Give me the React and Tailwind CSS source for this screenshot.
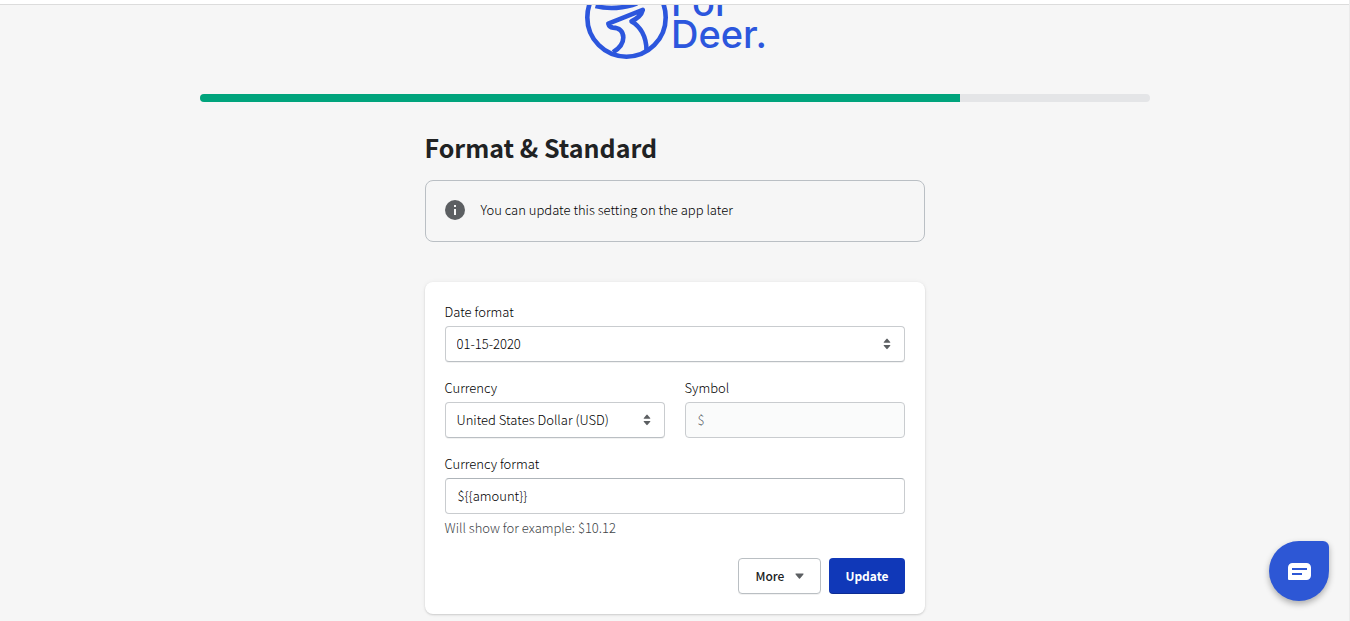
import React from "react";

function Logo() {
  return (
    <svg
      className="h-[54px] w-[180px] shrink-0"
      viewBox="0 0 180 54"
      overflow="visible"
      role="img"
      aria-label="For Deer."
      fill="none"
      stroke="#2c56dd"
      strokeWidth="4.6"
      strokeLinejoin="round"
    >
      <defs>
        <clipPath id="logo-area">
          <rect x="0" y="0" width="184" height="54" />
        </clipPath>
      </defs>
      <g clipPath="url(#logo-area)">
        <circle cx="41.5" cy="12.5" r="39.2" />
        <path d="M10.5 1C23 4.4 40 3.4 52 -1.6" />
        <path d="M28 47.2C36 42.5 38.3 38 38.3 32.5C38.3 26 34 22.8 28 22.6C25.5 22.4 23.8 20.5 23.3 18.6L57.8 4.8C56.3 10.6 52.5 13.2 46.5 16.4C55 21 61.5 31 61.5 45.5" />
        <g
          fill="#2c56dd"
          stroke="none"
          fontFamily="Inter, 'Liberation Sans', sans-serif"
          fontSize="38"
          fontWeight="500"
        >
          <text x="86" y="11">For</text>
          <text x="86" y="43">Deer.</text>
        </g>
      </g>
    </svg>
  );
}

function Updown() {
  return (
    <svg
      className="pointer-events-none absolute right-3 top-2 h-5 w-3"
      viewBox="0 0 12 20"
      fill="#5c5f62"
      aria-hidden="true"
    >
      <path d="M3.2 8.7h5.6c.5 0 .6-.4.4-.8L6.6 4.9a.8.8 0 0 0-1.2 0L2.8 7.9c-.2.4-.1.8.4.8z" />
      <path d="M3.2 11h5.6c.5 0 .6.4.4.8L6.6 14.800a.8.8 0 0 1-1.2 0L2.8 11.8c-.2-.4-.1-.8.4-.8z" />
    </svg>
  );
}

function Field({ id, label, help, children }) {
  return (
    <div className="flex min-w-0 flex-1 flex-col gap-1">
      <label htmlFor={id}>{label}</label>
      {children}
      {help && (
        <p id={`${id}-help`} className="text-[#404448]">
          {help}
        </p>
      )}
    </div>
  );
}

function Select({ id, options }) {
  return (
    <div className="relative">
      <select
        id={id}
        className="block h-9 w-full appearance-none rounded border border-[#c9cccf] border-b-[#babfc3] bg-white pl-[11px] pr-8 shadow-[0_1px_0_rgba(0,0,0,0.05)]"
      >
        {options.map((option) => (
          <option key={option}>{option}</option>
        ))}
      </select>
      <Updown />
    </div>
  );
}

export default function App() {
  return (
    <div className="min-h-screen border-r border-[#ebebeb] bg-[#f6f6f6] font-['Noto_Sans_CJK_SC','Noto_Sans',sans-serif] text-[13px] font-light leading-5 text-black">
      <header className="h-[5px] border-b border-[#dcdcdc] bg-white" />

      <main className="mx-auto flex max-w-[950px] flex-col items-center">
        <Logo />

        <div
          role="progressbar"
          aria-label="Setup progress"
          aria-valuenow={80}
          aria-valuemin={0}
          aria-valuemax={100}
          className="mt-[35px] h-2 w-full overflow-hidden rounded-full bg-[#e4e5e7]"
        >
          <div className="h-full w-4/5 bg-[#00a47c]" />
        </div>

        <div className="w-full max-w-[500px]">
          <h1 className="mt-[31px] text-[25px] font-bold leading-7 text-[#202223]">
            Format &amp; Standard
          </h1>

          <div className="mt-[19px] flex items-start gap-4 rounded-lg border border-[#babfc4] px-[19px] pb-[21px] pt-[19px]">
            <svg className="h-5 w-5 shrink-0" viewBox="0 0 20 20" aria-hidden="true">
              <circle cx="10" cy="10" r="10" fill="#5c5f62" />
              <path d="M9 5h2v2H9zM9 9h2v6H9z" fill="#f6f6f6" />
            </svg>
            <p>You can update this setting on the app later</p>
          </div>

          <form
            onSubmit={(event) => event.preventDefault()}
            className="mt-10 flex flex-col rounded-lg bg-white p-5 shadow-[0_0_5px_rgba(23,24,24,0.05),0_1px_2px_rgba(0,0,0,0.15)]"
          >
            <div className="flex flex-col gap-4">
              <Field id="date-format" label="Date format">
                <Select id="date-format" options={["01-15-2020"]} />
              </Field>
              <div className="flex gap-5">
                <Field id="currency" label="Currency">
                  <Select id="currency" options={["United States Dollar (USD)"]} />
                </Field>
                <Field id="symbol" label="Symbol">
                  <input
                    id="symbol"
                    disabled
                    defaultValue="$"
                    className="h-9 w-full rounded border border-[#c9cccf] bg-[#fafbfb] px-3 pb-0.5 text-[#63686d]"
                  />
                </Field>
              </div>
              <Field id="currency-format" label="Currency format" help="Will show for example: $10.12">
                <input
                  id="currency-format"
                  aria-describedby="currency-format-help"
                  defaultValue="${{amount}}"
                  className="h-9 w-full rounded border border-[#c9cccf] border-t-[#aeb4b9] bg-white px-3 pb-0.5"
                />
              </Field>
            </div>

            <div className="mt-5 flex justify-end gap-2">
              <button
                type="button"
                className="flex h-9 items-center gap-2 rounded border border-[#babfc3] bg-white px-4 text-xs font-medium text-[#202223] shadow-[0_1px_0_rgba(0,0,0,0.05)]"
              >
                More
                <svg className="h-5 w-3" viewBox="0 0 12 20" fill="#5c5f62" aria-hidden="true">
                  <path d="M4 7.500h7c.5 0 .7.500.4.900L8 12.400a.7.7 0 0 1-1 0L3.600 8.400c-.3-.4-.1-.9.4-.9z" />
                </svg>
              </button>
              <button
                type="submit"
                className="h-9 rounded bg-[#1038b8] px-4 text-xs font-bold text-white shadow-[inset_0_-1px_0_rgba(0,0,0,0.2)]"
              >
                Update
              </button>
            </div>
          </form>
        </div>
      </main>

      <button
        type="button"
        aria-label="Open chat"
        className="fixed bottom-5 right-[21px] flex h-[60px] w-[60px] items-center justify-center rounded-[30px] rounded-tr-md bg-[#2d57d5] shadow-[0_3px_6px_rgba(0,0,0,0.3)]"
      >
        <svg className="h-[18px] w-6" viewBox="0 0 24 18" aria-hidden="true">
          <path
            d="M5.500 1h14A4.500 4.500 0 0 1 24 5.500v8a4.500 4.500 0 0 1-4.500 4.500H2a1 1 0 0 1-1-1V5.500A4.500 4.500 0 0 1 5.500 1z"
            fill="#fff"
          />
          <path d="M5 7h15M5 12h10" stroke="#2d57d5" strokeWidth="2" />
        </svg>
      </button>
    </div>
  );
}
